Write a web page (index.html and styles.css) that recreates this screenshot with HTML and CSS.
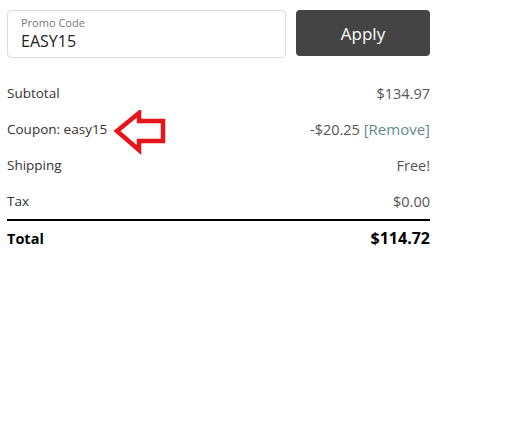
FILE: index.html
```html
<!DOCTYPE html>
<html lang="en">
<head>
    <meta charset="UTF-8">
    <meta name="viewport" content="width=device-width, initial-scale=1.0">
    <title>Cart Summary</title>
    <link rel="stylesheet" href="styles.css">
</head>
<body>
    <div class="summary">
        <div class="promo">
            <div class="promo-field">
                <label for="promo">Promo Code</label>
                <input type="text" id="promo" value="EASY15">
            </div>
            <button class="apply">Apply</button>
        </div>

        <div class="rows">
            <div class="row">
                <span>Subtotal</span>
                <span class="value">$134.97</span>
            </div>
            <div class="row coupon">
                <span>Coupon: easy15</span>
                <span class="value">-$20.25 <a href="#" class="remove">[Remove]</a></span>
                <!-- annotation arrow -->
                <svg class="arrow" width="56" height="46" viewBox="0 0 56 46">
                    <path d="M4 21 L26 3 L26 11 L50 11 L50 31 L26 31 L26 40 Z" fill="none" stroke="#e8141c" stroke-width="4.5" stroke-linejoin="miter"/>
                </svg>
            </div>
            <div class="row">
                <span>Shipping</span>
                <span class="value">Free!</span>
            </div>
            <div class="row">
                <span>Tax</span>
                <span class="value">$0.00</span>
            </div>
            <div class="row total">
                <span>Total</span>
                <span class="total-value">$114.72</span>
            </div>
        </div>
    </div>
</body>
</html>
```

FILE: styles.css
```css
* {
    margin: 0;
    padding: 0;
    box-sizing: border-box;
    font-family: 'Open Sans', 'Noto Sans', sans-serif;
}

body {
    background: #fff;
    color: #333;
    padding: 10px 0 0 7px;
}

.summary {
    width: 423px;
}

.promo {
    display: flex;
    gap: 10px;
    align-items: flex-start;
}

.promo-field {
    flex: 1;
    height: 48px;
    border: 1px solid #dcdcdc;
    border-radius: 4px;
    padding: 5px 13px 0;
}

.promo-field label {
    display: block;
    font-size: 11px;
    line-height: 14px;
    color: #777;
}

.promo-field input {
    width: 100%;
    margin-top: -4px;
    border: none;
    outline: none;
    font-size: 16px;
    line-height: 18px;
    color: #222;
    background: transparent;
}

.apply {
    width: 134px;
    height: 46px;
    background: #444;
    border: none;
    border-radius: 4px;
    color: #fff;
    font-size: 17px;
    cursor: pointer;
}

.rows {
    margin-top: 17px;
}

.row {
    position: relative;
    display: flex;
    justify-content: space-between;
    align-items: center;
    height: 36px;
    font-size: 13.5px;
}

.value {
    color: #555;
    font-size: 14.5px;
}

.remove {
    color: #5f8a8b;
    text-decoration: none;
    font-size: 15px;
}

.arrow {
    position: absolute;
    left: 106px;
    top: -1px;
}

.total {
    border-top: 2px solid #000;
    color: #000;
    font-weight: 700;
    font-size: 14.5px;
}

.total-value {
    font-size: 16px;
}
```
